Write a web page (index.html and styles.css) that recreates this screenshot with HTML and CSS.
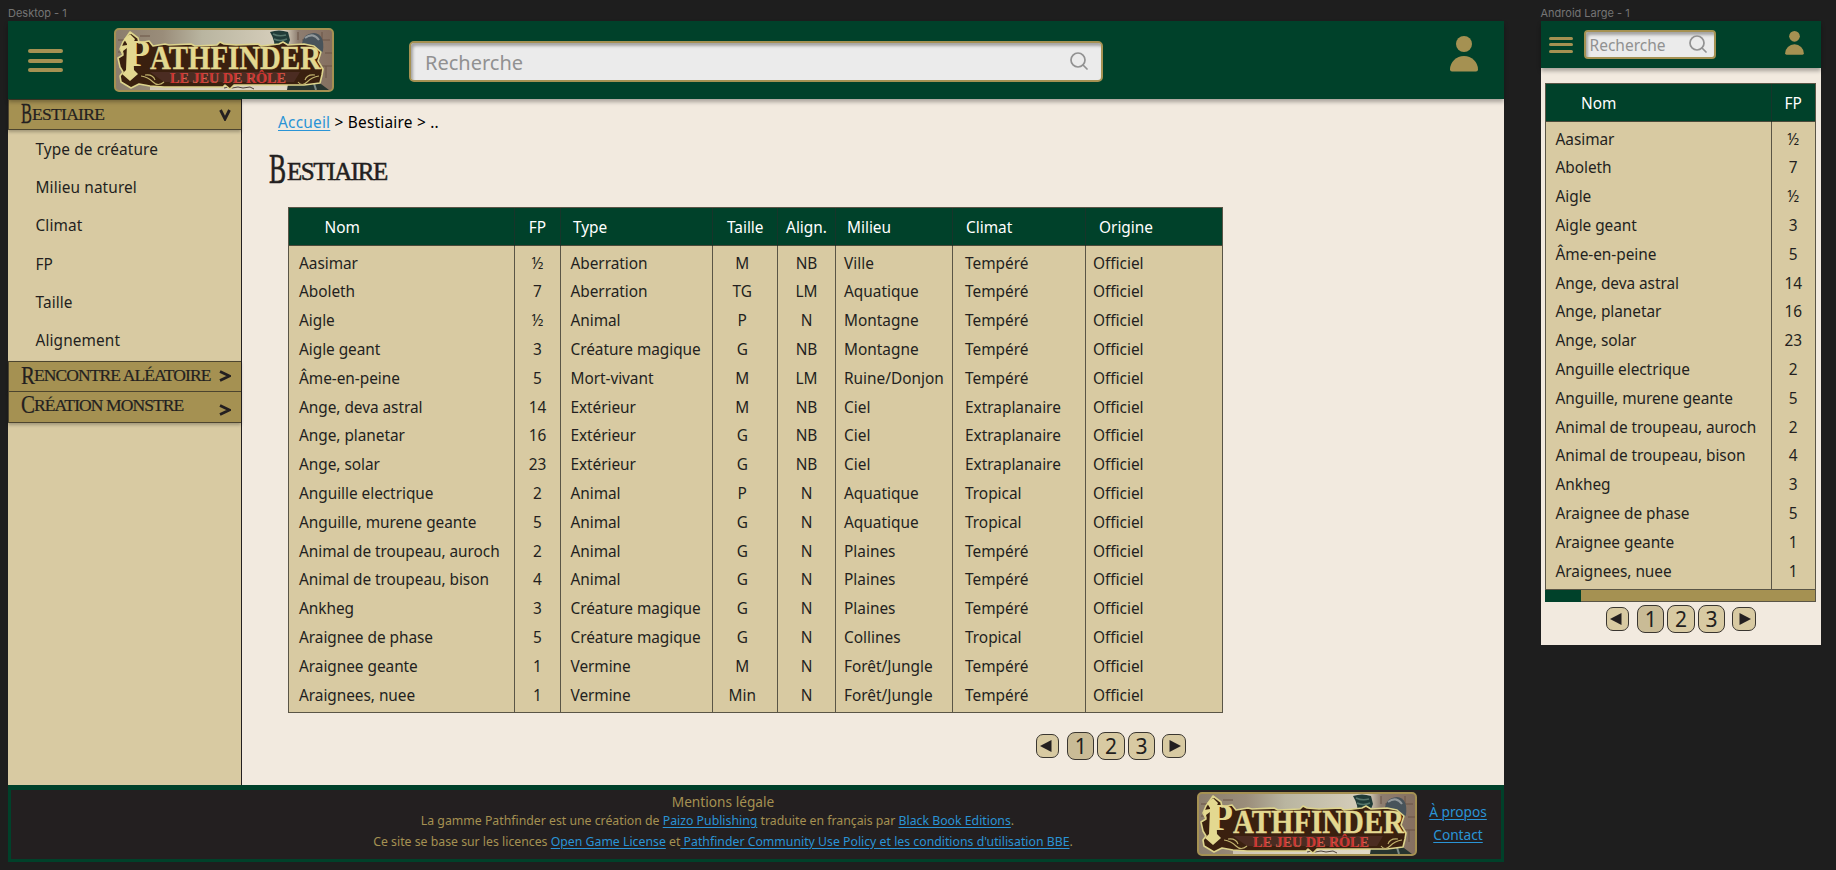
FILE: index.html
```html
<!DOCTYPE html>
<html lang="fr">
<head>
<meta charset="utf-8">
<title>Bestiaire</title>
<link rel="stylesheet" href="styles.css">
</head>
<body>
<svg class="defs" width="0" height="0" aria-hidden="true">
  <defs>
    <linearGradient id="sky" x1="0" x2="1"><stop offset="0" stop-color="#8b7d6c"/><stop offset=".22" stop-color="#9a8d7a"/><stop offset=".4" stop-color="#b9b5a0"/><stop offset=".78" stop-color="#d8d0bd"/><stop offset=".84" stop-color="#8d7d70"/><stop offset="1" stop-color="#856f5f"/></linearGradient>
    <linearGradient id="haze" x1="0" x2="0" y1="0" y2="1"><stop offset=".5" stop-color="#e4dccb" stop-opacity="0"/><stop offset="1" stop-color="#e4dccb" stop-opacity=".75"/></linearGradient>
    <symbol id="plate" viewBox="0 0 220 64">
      <rect x="1" y="1" width="218" height="62" rx="4" fill="url(#sky)"/>
      <rect x="36" y="2" width="140" height="60" fill="url(#haze)"/>
      <path d="M4 12h16M26 8h10M4 24h8M8 54h18M188 12h28M208 4v8M211 25h7M206 38h12M212 38v12M184 4v8" stroke="#6b5546" stroke-width="1"/>
      <path d="M156 4q9-3 18 0l2 8-4 10h-12q2-8-4-18z" fill="#203b38"/>
      <path d="M159 6q6 3 13 1M160 11q6 3 13 0" stroke="#55756b" stroke-width="1.5" fill="none"/>
      <path d="M188 20q-1-14 12-15 11 1 9 18l-3 4h-16z" fill="#48535a"/>
      <path d="M191 10q8-6 14 2" stroke="#93999b" stroke-width="2" fill="none"/>
      <path d="M175 50l26-2 6 8 8 6h-42z" fill="#27342f"/>
      <path d="M198 49l4 13" stroke="#7b8985" stroke-width="2"/>
      <path d="M110 60l5-1 3 1 6-1 5 1 7-1 4 2" stroke="#4c4238" fill="none"/>
      <path d="M16 4l8 6 1 5 10-2 4 5 12-2 4 1 22-1 4 2 22-1 3-3 4 2 12 1 22-1 3 2 18-2 4-2 5 3 16-1 10 2 7 6-3 9 5 8-1 6-2 8-16 2H120l-4 4-5-4-2 2H50l-14-1-11-2-8 4-10-6-1-6 3-4-3-5-2-9 5-3-3-6 3-7z" fill="#3a200f" stroke="#ddd48c" stroke-width="1.6" stroke-linejoin="round"/>
      <path d="M36 44h150l-6 10H50z" fill="#4b2c22"/>
      <path d="M27 48q7 1 12 6t11 0M31 47q8-1 10 5M205 48q-7 1-12 6t-9 0M201 47q-8-1-10 5" stroke="#c2b36e" stroke-width="1.1" fill="none"/>
      <path d="M16 6l5 5-2 5 1 26 4 4-8 7-8-7 4-4 1-26-3-5z" fill="#e3d890"/>
      <path d="M7 18l6-1v3l-4 3 1 4-3-4z" fill="#e3d890"/>
      <rect x="1" y="1" width="218" height="62" rx="4" fill="none" stroke="#a59152" stroke-width="2"/>
    </symbol>
    <symbol id="user" viewBox="0 0 28 36"><circle cx="14" cy="8" r="8"/><path d="M0 33.500a14 13.500 0 0 1 28 0q0 2-2 2H2q-2 0-2-2z"/></symbol>
    <symbol id="search" viewBox="0 0 18 18"><circle cx="8" cy="8" r="7" fill="none" stroke="#919191" stroke-width="1.700"/><path d="M13 13l4 4" stroke="#919191" stroke-width="1.700" stroke-linecap="round"/></symbol>
  </defs>
</svg>
<section class="board desktop">
  <div class="label">Desktop - 1</div>
  <div class="frame">
    <header class="top">
      <div class="burger"><i></i><i></i><i></i></div>
      <svg class="logo" viewBox="0 0 220 64"><use href="#plate"/><g class="wordmark"><text class="initial" x="13" y="38" textLength="23" lengthAdjust="spacingAndGlyphs">P</text><text class="name" x="36" y="41" textLength="171" lengthAdjust="spacingAndGlyphs">ATHFINDER</text><text class="tag" x="56" y="55" textLength="116" lengthAdjust="spacingAndGlyphs">LE JEU DE RÔLE</text></g></svg>
      <div class="search"><span>Recherche</span><svg><use href="#search"/></svg></div>
      <svg class="user"><use href="#user"/></svg>
    </header>
    <div class="middle">
      <nav class="side">
        <div class="bar"><span class="fancy"><b>B</b><span class="w-best">ESTIAIRE</span></span><svg class="chev" viewBox="0 0 12 12"><path d="M1.500 1l4.500 9 4.500-9"/></svg></div>
        <ul>
          <li>Type de créature</li><li>Milieu naturel</li><li>Climat</li><li>FP</li><li>Taille</li><li>Alignement</li>
        </ul>
        <div class="bar second"><span class="fancy"><b class="wide">R</b><span class="w-renc">ENCONTRE ALÉATOIRE</span></span><svg class="chev" viewBox="0 0 12 12"><path d="M1 1.500l9.500 4.500-9.500 4.500"/></svg></div>
        <div class="bar last"><span class="fancy"><b class="wide">C</b><span class="w-crea">RÉATION MONSTRE</span></span><svg class="chev low" viewBox="0 0 12 12"><path d="M1 1.500l9.500 4.500-9.500 4.500"/></svg></div>
      </nav>
      <main>
        <div class="crumbs"><a>Accueil</a> &gt; Bestiaire &gt; ..</div>
        <h1><b>B</b><span>ESTIAIRE</span></h1>
        <div class="grid full">
          <div class="col nom"><div class="th">Nom</div><div class="td">Aasimar
Aboleth
Aigle
Aigle geant
Âme-en-peine
Ange, deva astral
Ange, planetar
Ange, solar
Anguille electrique
Anguille, murene geante
Animal de troupeau, auroch
Animal de troupeau, bison
Ankheg
Araignee de phase
Araignee geante
Araignees, nuee</div></div>
          <div class="col mid"><div class="th">FP</div><div class="td">½
7
½
3
5
14
16
23
2
5
2
4
3
5
1
1</div></div>
          <div class="col type"><div class="th">Type</div><div class="td">Aberration
Aberration
Animal
Créature magique
Mort-vivant
Extérieur
Extérieur
Extérieur
Animal
Animal
Animal
Animal
Créature magique
Créature magique
Vermine
Vermine</div></div>
          <div class="col mid taille"><div class="th">Taille</div><div class="td">M
TG
P
G
M
M
G
G
P
G
G
G
G
G
M
Min</div></div>
          <div class="col mid"><div class="th">Align.</div><div class="td">NB
LM
N
NB
LM
NB
NB
NB
N
N
N
N
N
N
N
N</div></div>
          <div class="col milieu"><div class="th">Milieu</div><div class="td">Ville
Aquatique
Montagne
Montagne
Ruine/Donjon
Ciel
Ciel
Ciel
Aquatique
Aquatique
Plaines
Plaines
Plaines
Collines
Forêt/Jungle
Forêt/Jungle</div></div>
          <div class="col climat"><div class="th">Climat</div><div class="td">Tempéré
Tempéré
Tempéré
Tempéré
Tempéré
Extraplanaire
Extraplanaire
Extraplanaire
Tropical
Tropical
Tempéré
Tempéré
Tempéré
Tropical
Tempéré
Tempéré</div></div>
          <div class="col origine"><div class="th">Origine</div><div class="td">Officiel
Officiel
Officiel
Officiel
Officiel
Officiel
Officiel
Officiel
Officiel
Officiel
Officiel
Officiel
Officiel
Officiel
Officiel
Officiel</div></div>
        </div>
        <div class="pager"><span class="arrow"><svg viewBox="0 0 12 12"><path d="M11.500 0v12L0 6z"/></svg></span><span class="page on">1</span><span class="page">2</span><span class="page">3</span><span class="arrow next"><svg viewBox="0 0 12 12"><path d="M.5 0v12L12 6z"/></svg></span></div>
      </main>
    </div>
    <footer>
      <div class="legal">
        <p class="head">Mentions légale</p>
        <p class="l1">La gamme Pathfinder est une création de <a>Paizo Publishing</a> traduite en français par <a>Black Book Editions</a>.</p>
        <p class="l2">Ce site se base sur les licences <a>Open Game License</a> et<a> Pathfinder Community Use Policy et les conditions d'utilisation BBE</a>.</p>
      </div>
      <svg class="logo" viewBox="0 0 220 64"><use href="#plate"/><g class="wordmark"><text class="initial" x="13" y="38" textLength="23" lengthAdjust="spacingAndGlyphs">P</text><text class="name" x="36" y="41" textLength="171" lengthAdjust="spacingAndGlyphs">ATHFINDER</text><text class="tag" x="56" y="55" textLength="116" lengthAdjust="spacingAndGlyphs">LE JEU DE RÔLE</text></g></svg>
      <div class="links"><a>À propos</a><a>Contact</a></div>
    </footer>
  </div>
</section>
<section class="board mobile">
  <div class="label">Android Large - 1</div>
  <div class="frame">
    <header class="top">
      <div class="burger"><i></i><i></i><i></i></div>
      <div class="search"><span>Recherche</span><svg><use href="#search"/></svg></div>
      <svg class="user"><use href="#user"/></svg>
    </header>
    <div class="grid small">
      <div class="col nom"><div class="th">Nom</div><div class="td">Aasimar
Aboleth
Aigle
Aigle geant
Âme-en-peine
Ange, deva astral
Ange, planetar
Ange, solar
Anguille electrique
Anguille, murene geante
Animal de troupeau, auroch
Animal de troupeau, bison
Ankheg
Araignee de phase
Araignee geante
Araignees, nuee</div></div>
      <div class="col mid"><div class="th">FP</div><div class="td">½
7
½
3
5
14
16
23
2
5
2
4
3
5
1
1</div></div>
    </div>
    <div class="scroll"><i></i></div>
    <div class="pager"><span class="arrow"><svg viewBox="0 0 12 12"><path d="M11.500 0v12L0 6z"/></svg></span><span class="page on">1</span><span class="page">2</span><span class="page">3</span><span class="arrow next"><svg viewBox="0 0 12 12"><path d="M.5 0v12L12 6z"/></svg></span></div>
  </div>
</section>
</body>
</html>
```
FILE: styles.css
```css
* { box-sizing: border-box; }
body {
  margin: 0;
  height: 870px;
  overflow: hidden;
  display: flex;
  align-items: flex-start;
  gap: 36.500px;
  padding-left: 8px;
  background: #1e1e1e;
  color: #231f20;
  font: 15.4px/20px "Noto Sans", sans-serif;
}
.defs { position: absolute; }
a { color: #2a94d6; text-decoration: underline; text-decoration-thickness: 1px; text-underline-offset: 2px; }
.label { height: 21px; padding-top: 6px; font: 11px/14px Inter, sans-serif; color: #757575; }
.desktop { width: 1496px; }
.mobile { width: 280.500px; }
.frame { background: #f2eadf; display: flex; flex-direction: column; }
.desktop .frame { height: 841px; }
.mobile .frame { height: 623.500px; }

.top { position: relative; display: flex; background: #00412a; box-shadow: 0 3px 4px rgba(0, 0, 0, .3); }
.desktop .top { height: 78px; padding: 7px 26px 0 20px; }
.burger { display: flex; flex-direction: column; }
.burger i { background: #a59152; border-radius: 2px; }
.desktop .burger { width: 35px; gap: 5.7px; margin: 21px 51px 0 0; }
.desktop .burger i { height: 4px; }
.logo { width: 220px; height: 64px; flex: none; overflow: visible; }
.wordmark { font-family: "Liberation Serif", serif; font-weight: 700; fill: #e3d890; }
.initial { font-size: 37px; }
.name { font-size: 34px; stroke: #e3d890; stroke-width: .4; }
.tag { font-size: 14.500px; fill: #d0302f; stroke: #d8a07a; stroke-width: .2; }
.search {
  display: flex;
  background: #ebebeb;
  border: solid #a59152;
  box-shadow: inset 2px 3px 3px rgba(0, 0, 0, .3);
  color: #919191;
}
.desktop .search { width: 694px; height: 41px; margin: 13px 0 0 75px; border-width: 2.5px; border-radius: 5px; padding: 8px 13px 0 14px; justify-content: space-between; font-size: 20px; line-height: 24px; }
.desktop .search svg { width: 18px; height: 18px; margin-top: 1px; }
.user { fill: #a59152; }
.desktop .user { width: 28px; height: 36px; margin: 8px 0 0 auto; }

.middle { display: flex; flex: 1; }
.side { width: 234px; background: #d8caa2; border-right: 1px solid #231f20; }
.side ul { list-style: none; margin: 0; padding: 0 0 0 27.500px; height: 231px; }
.side li { height: 38.2px; line-height: 40px; letter-spacing: .1px; }
.bar { height: 31px; display: flex; justify-content: space-between; background: #a59152; border: 1px solid #4d452f; border-right: 0; box-shadow: 0 2px 3px rgba(0, 0, 0, .25); padding: 0 10px 0 12px; }
.bar.last { border-top: 0; }
.fancy { display: flex; font: 17.500px/29px "Liberation Serif", serif; white-space: nowrap; -webkit-text-stroke: .2px #231f20; }
.second .fancy, .last .fancy { line-height: 27px; }
.fancy b { width: 11px; font-weight: 400; font-size: 22px; line-height: 30px; transform: scale(.75, 1.3); transform-origin: 0 60%; }
.fancy b.wide { width: 13px; line-height: 28px; transform: scale(.95, 1.15); }
.w-best { letter-spacing: -.700px; }
.w-renc { letter-spacing: -.900px; }
.w-crea { letter-spacing: -.900px; }
.chev { width: 12px; height: 12px; margin-top: 9px; fill: none; stroke: #231f20; stroke-width: 2.8; }
.second .chev { margin-top: 8px; }
.chev.low { margin-top: 12px; }

main { flex: 1; padding-left: 27px; }
.crumbs { padding: 14px 0 0 9px; color: #000; height: 53px; letter-spacing: .22px; }
h1 { margin: 0; height: 55px; display: flex; font: 25px/40px "Liberation Serif", serif; -webkit-text-stroke: .5px #231f20; }
h1 b { width: 18px; font-weight: 400; font-size: 32px; transform: scale(.8, 1.35); transform-origin: 0 54%; }
h1 span { letter-spacing: -1.4px; }

.grid { display: grid; border: 1px solid #5a5546; background: #d8caa2; }
.full { width: 935px; height: 506px; margin-left: 19px; grid-template-columns: 226px 46px 151.5px 65.5px 58px 117px 133px 1fr; }
.small { width: 271.500px; height: 507px; margin: 15px 0 0 4px; grid-template-columns: 226px 1fr; }
.col { border-right: 1px solid #5a5546; }
.col:last-child { border-right: 0; }
.th { height: 38px; line-height: 39px; background: #00412a; color: #fff; border-bottom: 1px solid #4a4a3a; white-space: nowrap; }
.full .th { box-shadow: 1px 0 #17352a; }
.small .th { box-shadow: 1px 0 #17352a; }
.full .col:last-child .th, .small .col:last-child .th { box-shadow: none; }
.td { padding-top: 3.600px; line-height: 28.8px; white-space: pre; }
.nom .th { padding-left: 35.500px; }
.nom .td { padding-left: 10px; letter-spacing: -.04px; }
.mid { text-align: center; }
.type .th { padding-left: 12px; }
.type .td { padding-left: 9.500px; letter-spacing: -.05px; }
.taille .th { padding-left: 1px; }
.taille .td { padding-right: 5px; }
.milieu .th { padding-left: 11px; }
.milieu .td { padding-left: 8px; }
.climat .th { padding-left: 13px; }
.climat .td { padding-left: 12px; }
.origine .th { padding-left: 13px; }
.origine .td { padding-left: 7px; }

.pager { display: flex; align-items: center; gap: 3px; height: 28px; }
.desktop .pager { margin: 19px 0 0 766.500px; }
.pager span { display: flex; align-items: center; justify-content: center; background: #d8caa2; border: 1px solid #3a3630; }
.page { width: 27.400px; height: 27.400px; border-radius: 8px; font-size: 21px; }
.pager .on { background: #c9bb96; }
.arrow { width: 23.500px; height: 23.500px; border-radius: 7px; margin-right: 5px; }
.arrow.next { margin: 0 0 0 4px; }
.arrow svg { width: 12px; height: 12px; fill: #231f20; margin-right: 3px; }
.arrow.next svg { margin: 0 0 0 2px; }

footer { height: 77px; display: flex; background: #231f20; border: 3px solid #00412a; border-top-width: 5px; }
.legal { width: 1186px; padding: 2px 0 0 238px; text-align: center; color: #a59152; white-space: nowrap; flex: none; }
.legal p { margin: 0 -100px; height: 20.500px; line-height: 20px; font-size: 12.290px; }
.legal p.head { font-size: 13.700px; height: 19px; }
.legal p.l1 { margin-left: -111px; }
footer .logo { margin-top: 2px; }
.links { display: flex; flex-direction: column; gap: 3px; padding: 12px 0 0 6px; width: 76px; text-align: center; white-space: nowrap; font-size: 13.700px; }

.mobile .top { height: 47px; padding: 9px 17px 0 8px; }
.mobile .burger { width: 24px; gap: 3.600px; margin: 7px 11px 0 0; }
.mobile .burger i { height: 2.800px; }
.mobile .search { width: 132px; height: 29px; border-width: 2.500px; border-radius: 4px; padding: 4px 7px 0 4px; justify-content: space-between; font-size: 15.500px; line-height: 19px; }
.mobile .search svg { width: 18px; height: 18px; margin-top: -1px; }
.mobile .user { width: 19px; height: 24px; margin: 1px 0 0 auto; }
.scroll { width: 271.500px; height: 12px; margin-left: 4px; background: #a59152; border: solid #5a5546; border-width: 0 1px 1px 0; }
.scroll i { display: block; width: 36px; height: 12px; background: #00412a; }
.mobile .pager { margin: 3px 0 0 65px; }
```
